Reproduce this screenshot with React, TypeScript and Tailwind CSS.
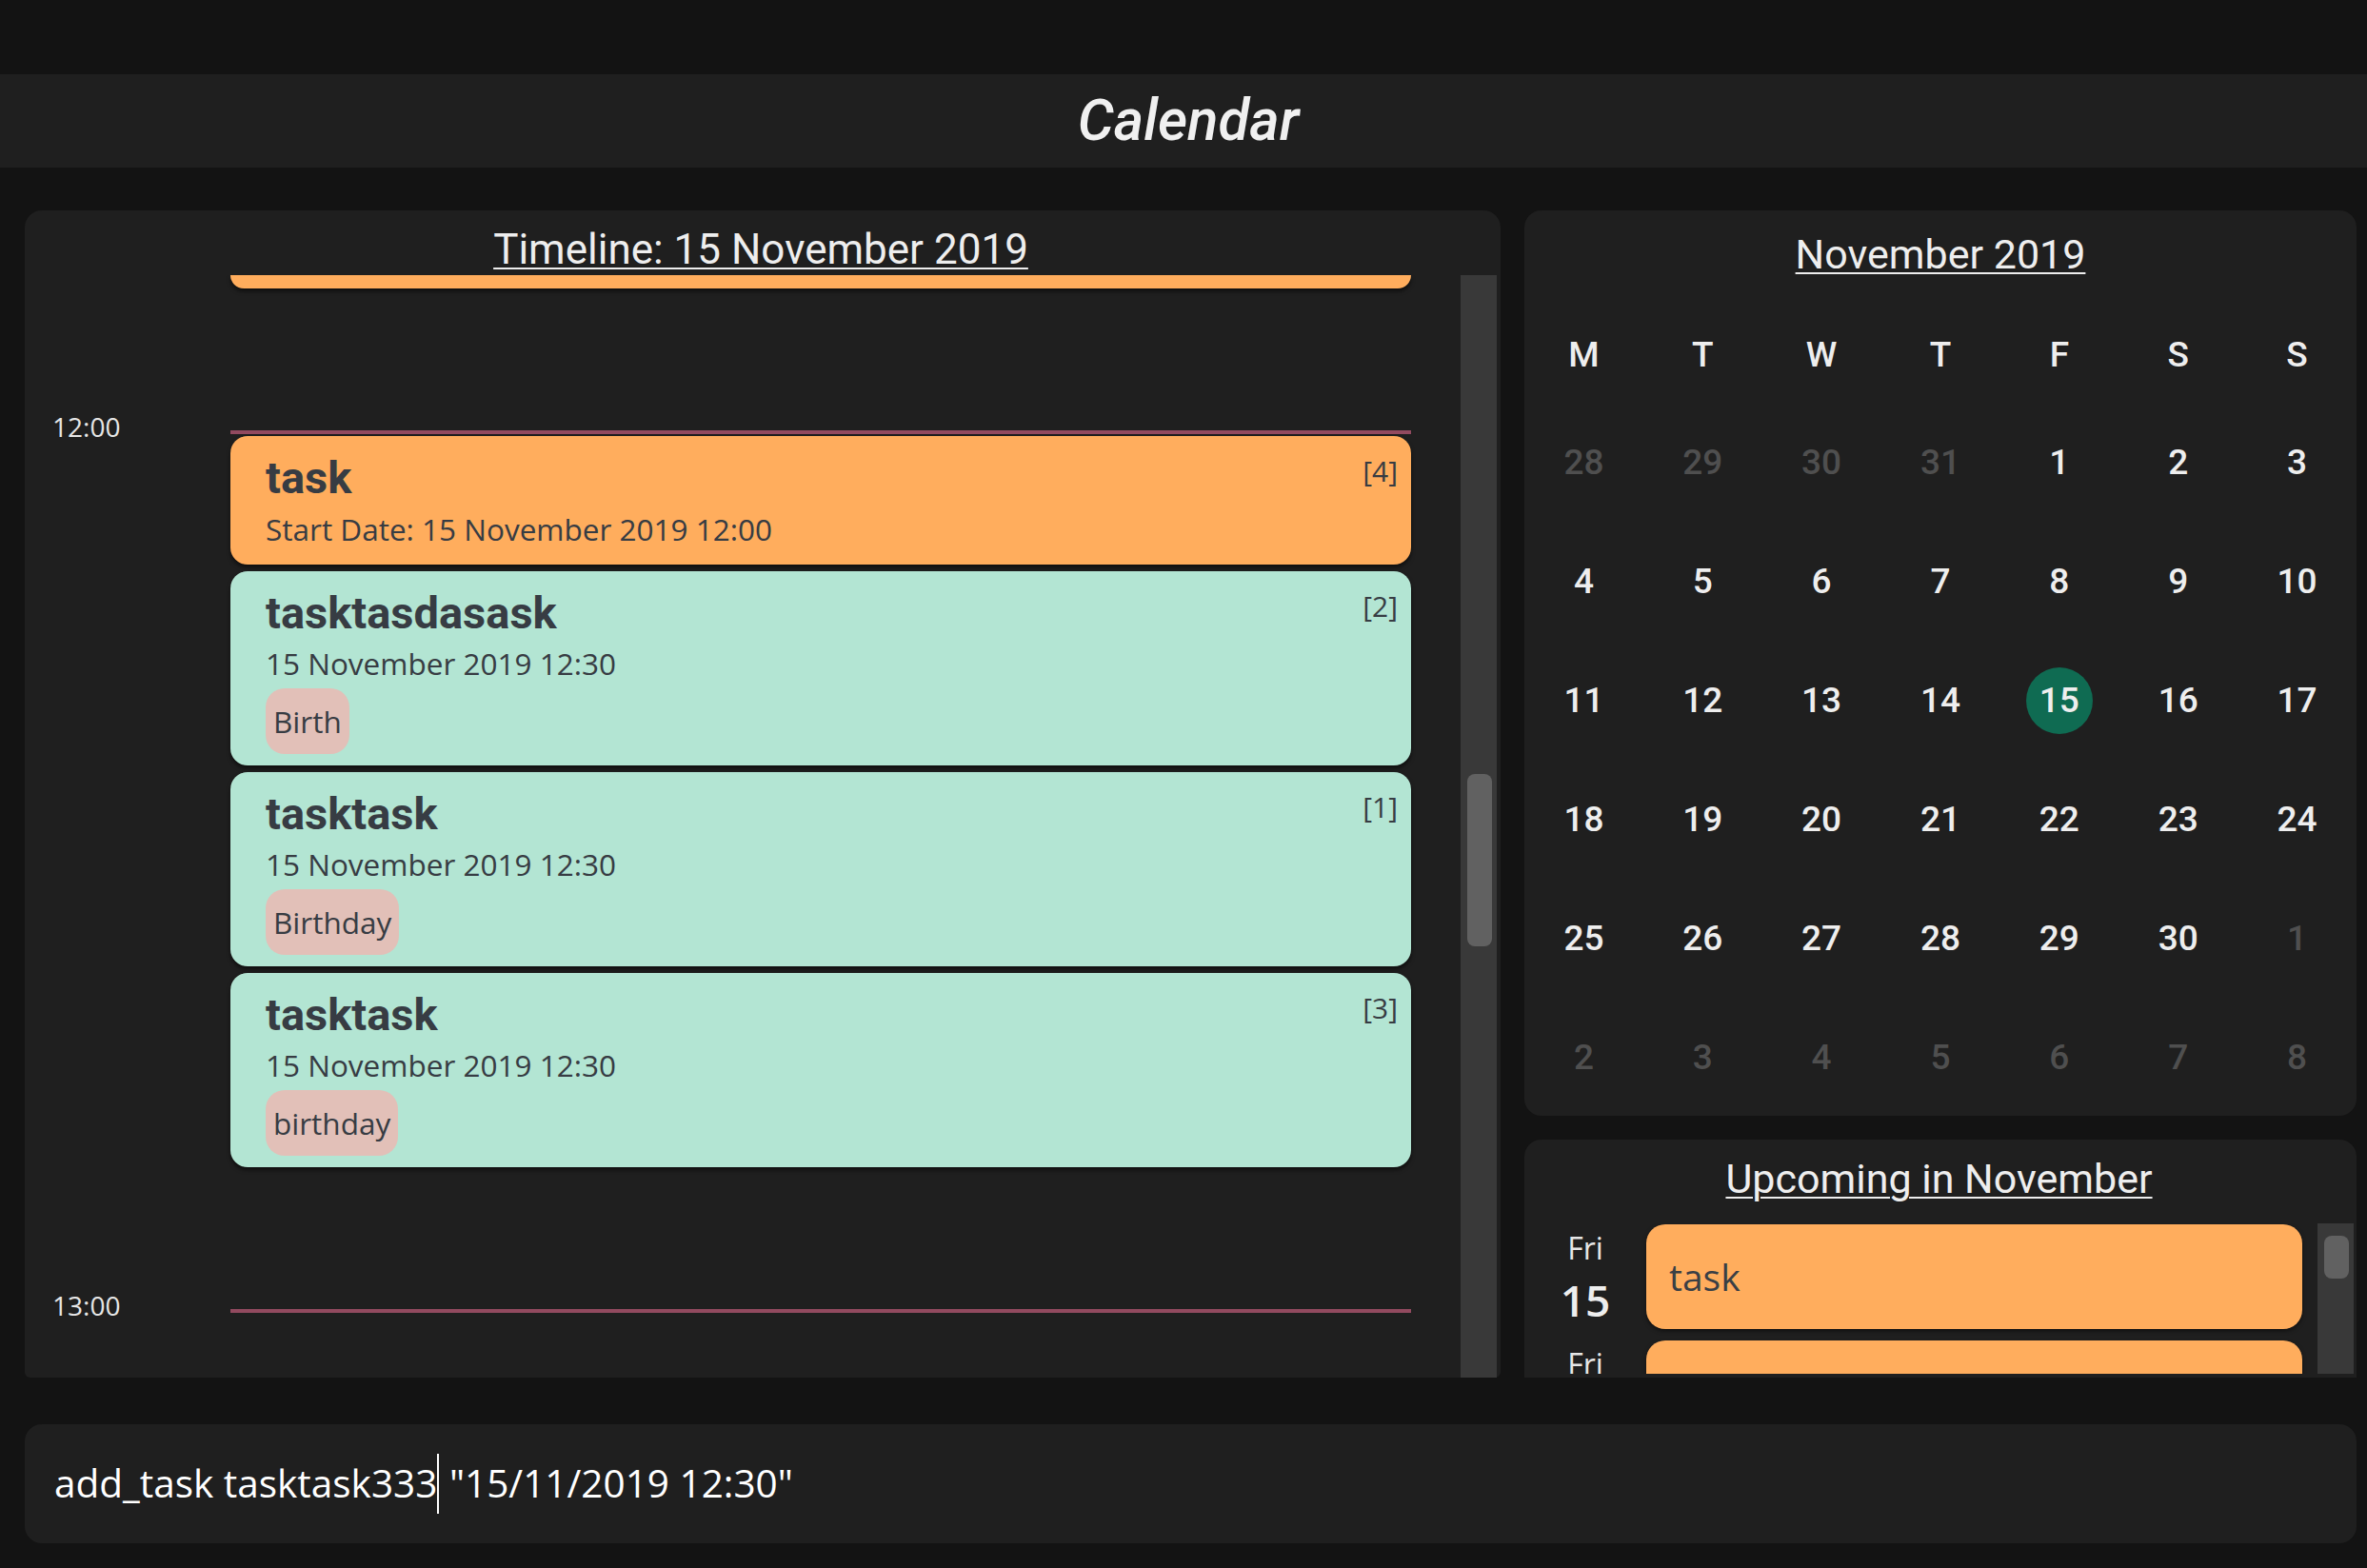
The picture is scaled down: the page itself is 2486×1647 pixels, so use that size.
const ORANGE = "bg-[#ffad5d]";

type Task = {
  title: string;
  line: string;
  index: number;
  tag?: string;
  tone: "orange" | "mint";
};

const tasks: Task[] = [
  { title: "task", line: "Start Date: 15 November 2019 12:00", index: 4, tone: "orange" },
  { title: "tasktasdasask", line: "15 November 2019 12:30", index: 2, tag: "Birth", tone: "mint" },
  { title: "tasktask", line: "15 November 2019 12:30", index: 1, tag: "Birthday", tone: "mint" },
  { title: "tasktask", line: "15 November 2019 12:30", index: 3, tag: "birthday", tone: "mint" },
];

const weekdays = ["M", "T", "W", "T", "F", "S", "S"];

// 6 weeks, Monday first; faded = outside November
const days: { n: number; faded?: boolean }[] = [
  ...[28, 29, 30, 31].map((n) => ({ n, faded: true })),
  ...Array.from({ length: 30 }, (_, i) => ({ n: i + 1 })),
  ...[1, 2, 3, 4, 5, 6, 7, 8].map((n) => ({ n, faded: true })),
];

function TaskCard({ task }: { task: Task }) {
  const bg = task.tone === "orange" ? ORANGE : "bg-[#b3e5d3]";
  return (
    <div
      className={`${bg} flex flex-col rounded-[18px] pl-[37px] pr-[14px] pt-[17px] text-[#373c43] shadow-[0_3px_4px_rgba(0,0,0,0.55)] ${
        task.tag ? "h-[204px]" : "h-[135px]"
      }`}
    >
      <div className="flex items-start justify-between">
        <span className="font-['Roboto',sans-serif] text-[47px] font-bold leading-[54px]">{task.title}</span>
        <span className="mt-[5px] text-[30px] leading-[30px]">[{task.index}]</span>
      </div>
      <div className={`text-[31.5px] leading-[42px] ${task.tag ? "mt-[5px]" : "mt-[6px]"}`}>{task.line}</div>
      {task.tag && (
        <div className="mt-[5px] flex">
          <span className="flex h-[69px] items-center rounded-[20px] bg-[#e2c0b8] px-[8px] text-[31.5px] leading-[42px]">
            {task.tag}
          </span>
        </div>
      )}
    </div>
  );
}

function HourBlock({ label, children, height }: { label: string; children?: React.ReactNode; height: string }) {
  return (
    <div className={`flex shrink-0 ${height}`}>
      <div className="w-[216px] shrink-0 pl-[29px]">
        <div className="-mt-[18px] text-[28px] leading-[28px] text-[#e6e6e6]">{label}</div>
      </div>
      <div className="flex w-[1240px] flex-col">
        <div className="h-[4px] bg-[#924a5f]" />
        <div className="mt-[2px] flex flex-col gap-[7px]">{children}</div>
      </div>
    </div>
  );
}

function Timeline() {
  return (
    <section className="flex w-[1550px] flex-col rounded-b-[6px] rounded-t-[18px] bg-[#1f1f1f] pr-[4px]">
      <div className="h-[68px] shrink-0 pt-[16px] text-center">
        <span className="font-['Roboto',sans-serif] text-[44px] leading-[50px] text-[#eeeeee] underline decoration-[2px] underline-offset-[4px]">
          Timeline: 15 November 2019
        </span>
      </div>
      <div className="flex min-h-0 flex-1 overflow-hidden">
        <div className="flex flex-1 flex-col">
          <div className="h-[163px] shrink-0">
            <div className={`${ORANGE} ml-[216px] h-[14px] w-[1240px] rounded-b-[18px] shadow-[0_3px_4px_rgba(0,0,0,0.55)]`} />
          </div>
          <HourBlock label="12:00" height="h-[923px]">
            {tasks.map((t, i) => (
              <TaskCard key={i} task={t} />
            ))}
          </HourBlock>
          <HourBlock label="13:00" height="h-[80px]" />
        </div>
        <div className="w-[38px] shrink-0 bg-[#393939] pl-[7px] pt-[524px]">
          <div className="h-[181px] w-[26px] rounded-[8px] bg-[#616161]" />
        </div>
      </div>
    </section>
  );
}

function MonthView() {
  return (
    <section className="h-[951px] shrink-0 rounded-[18px] bg-[#1f1f1f] font-['Roboto',sans-serif]">
      <div className="h-[102px] pt-[21px] text-center">
        <span className="text-[43px] leading-[50px] text-[#eeeeee] underline decoration-[2px] underline-offset-[4px]">
          November 2019
        </span>
      </div>
      <div className="grid h-[100px] grid-cols-7 items-center text-center text-[37px] font-medium text-[#eeeeee]">
        {weekdays.map((d, i) => (
          <span key={i}>{d}</span>
        ))}
      </div>
      <div className="grid grid-cols-7">
        {days.map((d, i) => (
          <div key={i} className="flex h-[125px] items-center justify-center">
            {!d.faded && d.n === 15 ? (
              <span className="flex h-[70px] w-[70px] items-center justify-center rounded-full bg-[#0f6b52] text-[37px] font-medium text-[#eeeeee]">
                15
              </span>
            ) : (
              <span className={`text-[37px] font-medium ${d.faded ? "text-[#4f4f4f]" : "text-[#eeeeee]"}`}>{d.n}</span>
            )}
          </div>
        ))}
      </div>
    </section>
  );
}

function Upcoming() {
  const rows = [{ day: "Fri", n: 15, title: "task" }, { day: "Fri", n: 15, title: "" }];
  return (
    <section className="flex min-h-0 flex-1 flex-col rounded-t-[18px] bg-[#1f1f1f] pr-[3px]">
      <div className="pt-[16px] text-center">
        <span className="font-['Roboto',sans-serif] text-[43px] leading-[50px] text-[#eeeeee] underline decoration-[2px] underline-offset-[4px]">
          Upcoming in November
        </span>
      </div>
      <div className="mt-[22px] flex h-[158px] overflow-hidden">
        <div className="flex flex-1 flex-col gap-[12px] pt-[1px]">
          {rows.map((r, i) => (
            <div key={i} className="flex h-[110px] shrink-0">
              <div className="flex w-[128px] flex-col items-center pt-[5px]">
                <span className="text-[32px] leading-[40px] text-[#e6e6e6]">{r.day}</span>
                <span className="mt-[9px] text-[46px] font-semibold leading-[50px] text-[#eeeeee]">{r.n}</span>
              </div>
              <div
                className={`${ORANGE} flex h-[110px] w-[689px] items-center rounded-[20px] pl-[24px] text-[39px] text-[#3a3f45] shadow-[0_2px_4px_rgba(0,0,0,0.5)]`}
              >
                {r.title}
              </div>
            </div>
          ))}
        </div>
        <div className="w-[38px] shrink-0 bg-[#393939] pl-[7px] pt-[13px]">
          <div className="h-[45px] w-[26px] rounded-[8px] bg-[#616161]" />
        </div>
      </div>
    </section>
  );
}

export default function App() {
  return (
    <div className="flex h-[1647px] w-[2486px] flex-col overflow-hidden bg-[#131313] font-['Open_Sans',sans-serif] text-[#eeeeee]">
      <div className="h-[78px] shrink-0" />
      <header className="flex h-[98px] shrink-0 items-center justify-center bg-[#1f1f1f]">
        <h1 className="pl-[10px] font-['Roboto',sans-serif] text-[60px] font-medium italic text-[#f0f0f0]">Calendar</h1>
      </header>
      <div className="mt-[45px] flex h-[1226px] shrink-0 gap-[25px] pl-[26px] pr-[11px]">
        <Timeline />
        <div className="flex w-[874px] flex-col gap-[25px]">
          <MonthView />
          <Upcoming />
        </div>
      </div>
      <div className="ml-[26px] mr-[11px] mt-[49px] flex h-[125px] shrink-0 items-center rounded-[18px] bg-[#1f1f1f] pl-[31px] text-[40.5px] text-white">
        <span className="whitespace-pre">add_task tasktask333</span>
        <span className="inline-block h-[63px] w-[2px] bg-white" />
        <span className="whitespace-pre"> "15/11/2019 12:30"</span>
      </div>
    </div>
  );
}
